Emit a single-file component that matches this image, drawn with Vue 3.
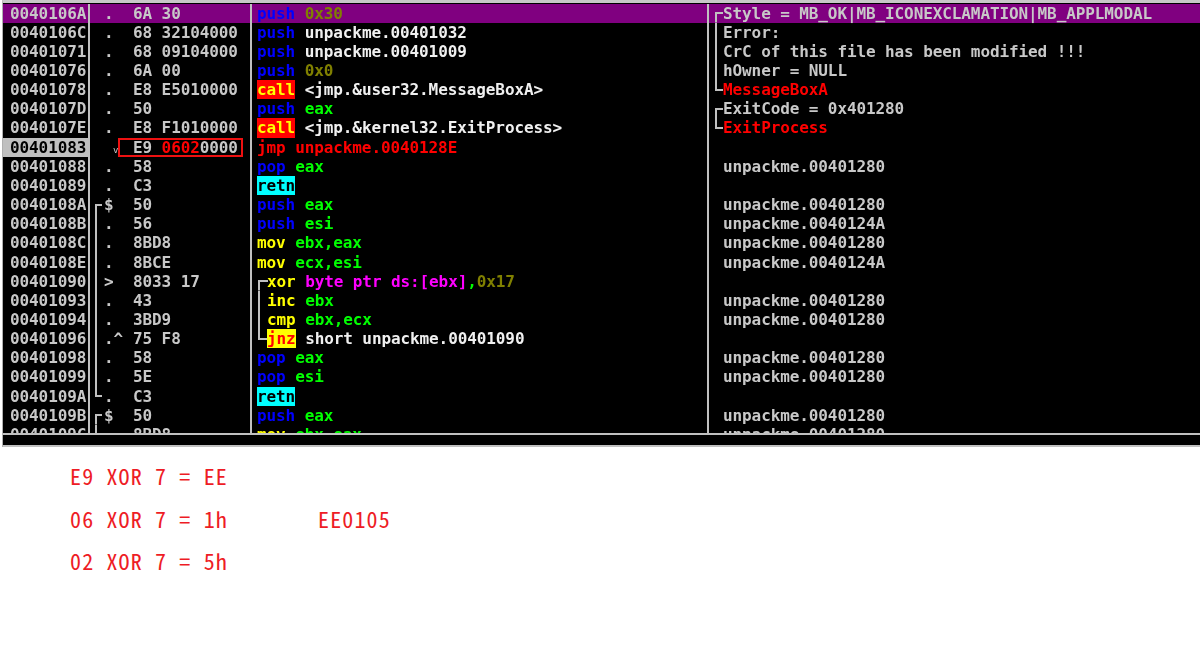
<script setup>
const rows = [
  { a: '0040106A', m: '.', b: '6A 30', d: [['push', 'blue'], [' '], ['0x30', 'olive']], c: 'Style = MB_OK|MB_ICONEXCLAMATION|MB_APPLMODAL', cg: 'top', sel: true },
  { a: '0040106C', m: '.', b: '68 32104000', d: [['push', 'blue'], [' '], ['unpackme.00401032', 'white']], c: 'Error:', cg: 'mid' },
  { a: '00401071', m: '.', b: '68 09104000', d: [['push', 'blue'], [' '], ['unpackme.00401009', 'white']], c: 'CrC of this file has been modified !!!', cg: 'mid' },
  { a: '00401076', m: '.', b: '6A 00', d: [['push', 'blue'], [' '], ['0x0', 'olive']], c: 'hOwner = NULL', cg: 'mid' },
  { a: '00401078', m: '.', b: 'E8 E5010000', d: [['call', 'tag-call'], [' '], ['<jmp.&user32.MessageBoxA>', 'white']], c: 'MessageBoxA', cc: 'red', cg: 'bot' },
  { a: '0040107D', m: '.', b: '50', d: [['push', 'blue'], [' '], ['eax', 'green']], c: 'ExitCode = 0x401280', cg: 'top' },
  { a: '0040107E', m: '.', b: 'E8 F1010000', d: [['call', 'tag-call'], [' '], ['<jmp.&kernel32.ExitProcess>', 'white']], c: 'ExitProcess', cc: 'red', cg: 'bot' },
  { a: '00401083', m: 'v', patched: true, d: [['jmp unpackme.0040128E', 'red']], c: '', cur: true },
  { a: '00401088', m: '.', b: '58', d: [['pop', 'blue'], [' '], ['eax', 'green']], c: 'unpackme.00401280' },
  { a: '00401089', m: '.', b: 'C3', d: [['retn', 'tag-ret']], c: '' },
  { a: '0040108A', ag: 'top', m: '$', b: '50', d: [['push', 'blue'], [' '], ['eax', 'green']], c: 'unpackme.00401280' },
  { a: '0040108B', ag: 'mid', m: '.', b: '56', d: [['push', 'blue'], [' '], ['esi', 'green']], c: 'unpackme.0040124A' },
  { a: '0040108C', ag: 'mid', m: '.', b: '8BD8', d: [['mov', 'yellow'], [' '], ['ebx,eax', 'green']], c: 'unpackme.00401280' },
  { a: '0040108E', ag: 'mid', m: '.', b: '8BCE', d: [['mov', 'yellow'], [' '], ['ecx,esi', 'green']], c: 'unpackme.0040124A' },
  { a: '00401090', ag: 'mid', m: '>', b: '8033 17', dg: 'top', d: [['xor', 'yellow'], [' '], ['byte ptr ds:[ebx]', 'magenta'], [',', 'green'], ['0x17', 'olive']], c: '' },
  { a: '00401093', ag: 'mid', m: '.', b: '43', dg: 'mid', d: [['inc', 'yellow'], [' '], ['ebx', 'green']], c: 'unpackme.00401280' },
  { a: '00401094', ag: 'mid', m: '.', b: '3BD9', dg: 'mid', d: [['cmp', 'yellow'], [' '], ['ebx,ecx', 'green']], c: 'unpackme.00401280' },
  { a: '00401096', ag: 'mid', m: '.^', b: '75 F8', dg: 'bot', d: [['jnz', 'tag-jnz'], [' '], ['short unpackme.00401090', 'white']], c: '' },
  { a: '00401098', ag: 'mid', m: '.', b: '58', d: [['pop', 'blue'], [' '], ['eax', 'green']], c: 'unpackme.00401280' },
  { a: '00401099', ag: 'mid', m: '.', b: '5E', d: [['pop', 'blue'], [' '], ['esi', 'green']], c: 'unpackme.00401280' },
  { a: '0040109A', ag: 'bot', m: '.', b: 'C3', d: [['retn', 'tag-ret']], c: '' },
  { a: '0040109B', ag: 'top', m: '$', b: '50', d: [['push', 'blue'], [' '], ['eax', 'green']], c: 'unpackme.00401280' },
  { a: '0040109C', ag: 'mid', m: '.', b: '8BD8', d: [['mov', 'yellow'], [' '], ['ebx,eax', 'green']], c: 'unpackme.00401280' }
]
</script>

<template>
  <div class="page">
    <section class="debugger">
      <div class="listing">
        <div v-for="r in rows" :key="r.a" class="row" :class="{ selected: r.sel }">
          <div class="cell addr" :class="{ current: r.cur }">{{ r.a }}</div>
          <div class="cell hex">
            <span class="gutter hex-gutter" :class="r.ag"></span>
            <span class="marker" :class="{ 'jump-mark': r.patched }">{{ r.m }}</span>
            <span v-if="r.patched" class="patched">E9 <span class="red">0602</span>0000</span>
            <span v-else>{{ r.b }}</span>
          </div>
          <div class="cell dis">
            <span v-if="r.dg" class="gutter dis-gutter" :class="r.dg"></span>
            <span v-for="(s, i) in r.d" :key="i" :class="s[1]">{{ s[0] }}</span>
          </div>
          <div class="cell com">
            <span class="gutter com-gutter" :class="r.cg"></span>
            <span :class="r.cc">{{ r.c }}</span>
          </div>
        </div>
      </div>
      <div class="info-pane"></div>
    </section>
    <section class="notes">
      <span>E9 XOR 7 = EE</span><span></span>
      <span>06 XOR 7 = 1h</span><span>EE0105</span>
      <span>02 XOR 7 = 5h</span><span></span>
    </section>
  </div>
</template>

<style scoped>
.page {
  width: 1200px;
  height: 655px;
  background: #fff;
  overflow: hidden;
}
.debugger {
  margin-left: 2px;
  border-top: 3px solid #c8c8c8;
  border-left: 1px solid #b0b0b0;
  background: #000;
}
.listing {
  height: 430px;
  overflow: hidden;
  padding-top: 0.5px;
  box-sizing: border-box;
  font-family: "DejaVu Sans Mono", monospace;
  font-size: 16px;
  font-weight: 700;
  letter-spacing: -0.1px;
  color: #c8c8c8;
  filter: blur(0.3px);
}
.row {
  display: grid;
  grid-template-columns: 87px 162px 457px 1fr;
  grid-template-rows: 19.16px;
  height: 19.16px;
  line-height: 19.16px;
  white-space: pre;
}
.row.selected {
  background: #800080;
}
.cell {
  display: flex;
  height: 19.16px;
  box-sizing: border-box;
  border-right: 2px solid #c0c0c0;
}
.addr {
  padding-left: 7px;
}
.addr.current {
  background: #c0c0c0;
  color: #000;
}
.hex {
  padding-left: 5px;
}
.dis {
  padding-left: 5px;
}
.com {
  border-right: 0;
  padding-left: 6px;
}
.gutter {
  flex: none;
  height: 100%;
  background-repeat: no-repeat;
}
.hex-gutter {
  width: 9px;
}
.dis-gutter {
  width: 10px;
  margin-left: 1px;
  margin-right: -1px;
}
.com-gutter {
  width: 8px;
}
.mid {
  background-image: linear-gradient(#c0c0c0, #c0c0c0);
  background-size: 2px 100%;
}
.top {
  background-image: linear-gradient(#c0c0c0, #c0c0c0), linear-gradient(#c0c0c0, #c0c0c0);
  background-size: 2px 50%, 100% 2px;
  background-position: 0 100%, 0 50%;
}
.bot {
  background-image: linear-gradient(#c0c0c0, #c0c0c0), linear-gradient(#c0c0c0, #c0c0c0);
  background-size: 2px 50%, 100% 2px;
  background-position: 0 0, 0 50%;
}
.hex-gutter.top,
.hex-gutter.bot {
  background-size: 2px 50%, 7px 2px;
}
.marker {
  flex: none;
  width: 29px;
}
.jump-mark {
  font-size: 9px;
  font-weight: 400;
  padding-left: 9px;
  width: 20px;
  transform: translateY(3px);
}
.patched {
  align-self: center;
  height: 15px;
  line-height: 15px;
  padding: 0 3px 0 13px;
  margin-left: -13px;
  outline: 2px solid #ee1111;
  outline-offset: 0;
}
.blue { color: #0000ff; }
.olive { color: #808000; }
.white { color: #f0f0f0; }
.green { color: #00ff00; }
.yellow { color: #ffff00; }
.magenta { color: #ff00ff; }
.red { color: #ff0000; }
.tag-call { background: #ff0000; color: #ffff00; }
.tag-ret { background: #00ffff; color: #000; }
.tag-jnz { background: #ffff00; color: #ff0000; }
.info-pane {
  height: 10px;
  border-top: 2px solid #c0c0c0;
  border-bottom: 2px solid #c0c0c0;
}
.notes {
  display: grid;
  grid-template-columns: 248px 1fr;
  grid-auto-rows: 42.5px;
  align-items: center;
  padding: 7px 0 0 68px;
  margin-left: 2px;
  font-family: "Noto Sans CJK SC", sans-serif;
  font-feature-settings: "hwid";
  font-size: 22px;
  letter-spacing: 1.15px;
  white-space: pre;
  color: #ee1c25;
}
</style>
